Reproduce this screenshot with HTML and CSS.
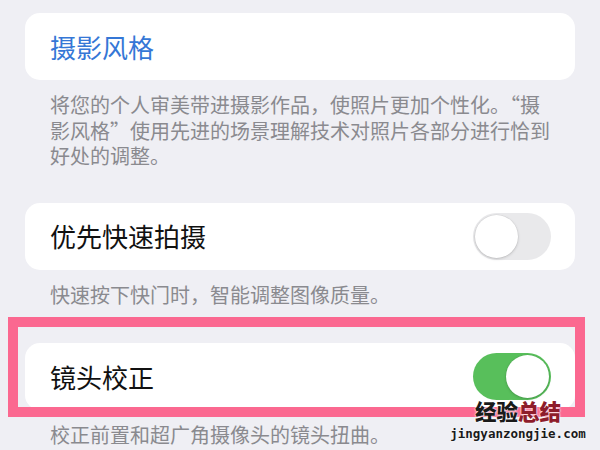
FILE: index.html
```html
<!DOCTYPE html>
<html lang="zh-CN">
<head>
<meta charset="utf-8">
<link rel="stylesheet" href="styles.css">
</head>
<body>
<div class="page">
  <div class="card">
    <span class="label label-blue">摄影风格</span>
  </div>
  <p class="note">将您的个人审美带进摄影作品，使照片更加个性化。“摄影风格”使用先进的场景理解技术对照片各部分进行恰到好处的调整。</p>

  <div class="card card-gap">
    <span class="label">优先快速拍摄</span>
    <span class="toggle"><span class="knob"></span></span>
  </div>
  <p class="note">快速按下快门时，智能调整图像质量。</p>

  <div class="card card-gap card-gap-wide">
    <span class="label">镜头校正</span>
    <span class="toggle toggle-on"><span class="knob"></span></span>
  </div>
  <p class="note">校正前置和超广角摄像头的镜头扭曲。</p>
</div>
<div class="highlight"></div>
<div class="watermark">
  <div class="wm-cn"><span class="wm-black">经验</span><span class="wm-red">总结</span></div>
  <div class="wm-en">jingyanzongjie.com</div>
</div>
</body>
</html>
```
FILE: styles.css
```css
html, body {
  margin: 0;
  padding: 0;
}
body {
  width: 600px;
  height: 450px;
  overflow: hidden;
  background: #efeff4;
  font-family: "Noto Sans CJK SC", "Noto Sans", sans-serif;
  position: relative;
}
.page {
  padding: 13px 25px 0 25px;
}
.card {
  height: 67px;
  background: #ffffff;
  border-radius: 15px;
  display: flex;
  align-items: center;
  justify-content: space-between;
  padding: 0 24px 0 25px;
}
.card-gap {
  margin-top: 34px;
}
.card-gap-wide {
  margin-top: 36px;
}
.label {
  font-size: 26px;
  color: #111111;
  line-height: 1;
}
.label-blue {
  color: #3577d6;
}
.note {
  margin: 12px 0 0 0;
  padding: 0 20px 0 25px;
  width: fit-content;
  font-size: 20px;
  line-height: 25.5px;
  color: #8a8a8f;
}
.toggle {
  width: 78px;
  height: 47px;
  border-radius: 24px;
  background: #e9e9eb;
  display: flex;
  align-items: center;
  padding: 0 2px;
  box-sizing: border-box;
}
.toggle-on {
  background: #58bf5b;
  justify-content: flex-end;
}
.knob {
  width: 43px;
  height: 43px;
  border-radius: 50%;
  background: #ffffff;
  box-shadow: 0 1px 3px rgba(0, 0, 0, 0.18), 0 0 0 0.5px rgba(0, 0, 0, 0.06);
}
.highlight {
  position: absolute;
  left: 8px;
  top: 317px;
  width: 577px;
  height: 100px;
  box-sizing: border-box;
  border: 10px solid #fb6890;
}
.watermark {
  position: absolute;
  left: 448px;
  top: 400px;
  width: 140px;
  display: flex;
  flex-direction: column;
  align-items: center;
  gap: 5px;
}
.wm-cn {
  font-size: 21.5px;
  font-weight: 900;
  line-height: 22px;
  height: 22px;
  text-shadow: 0 0 2px #fff, 0 0 2px #fff;
}
.wm-black {
  color: #1a1a1a;
}
.wm-red {
  color: #8e1c2b;
}
.wm-en {
  font-family: "DejaVu Sans Mono", monospace;
  font-weight: bold;
  font-size: 12.5px;
  line-height: 14px;
  height: 14px;
  color: #1a1a1a;
  text-shadow: 0 0 2px #fff;
}
```
